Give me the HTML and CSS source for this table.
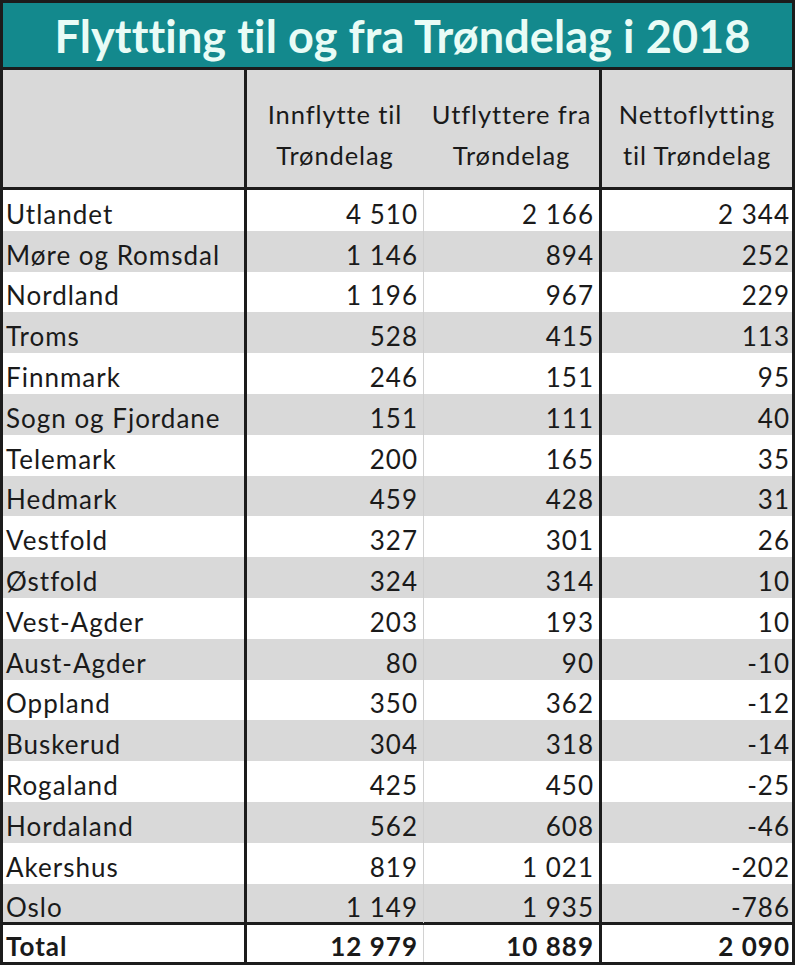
FILE: index.html
```html
<!DOCTYPE html>
<html lang="no">
<head>
<meta charset="utf-8">
<title>Flyttting til og fra Trøndelag i 2018</title>
<link rel="stylesheet" href="styles.css">
</head>
<body>
<div class="sheet">
  <div class="title">Flyttting til og fra Trøndelag i 2018</div>
  <div class="row head">
    <div class="c c1"></div>
    <div class="c c2">Innflytte til<br>Trøndelag</div>
    <div class="c c3">Utflyttere fra<br>Trøndelag</div>
    <div class="c c4">Nettoflytting<br>til Trøndelag</div>
  </div>
  <div class="row"><div class="c c1">Utlandet</div><div class="c c2">4 510</div><div class="c c3">2 166</div><div class="c c4">2 344</div></div>
  <div class="row alt"><div class="c c1">Møre og Romsdal</div><div class="c c2">1 146</div><div class="c c3">894</div><div class="c c4">252</div></div>
  <div class="row"><div class="c c1">Nordland</div><div class="c c2">1 196</div><div class="c c3">967</div><div class="c c4">229</div></div>
  <div class="row alt"><div class="c c1">Troms</div><div class="c c2">528</div><div class="c c3">415</div><div class="c c4">113</div></div>
  <div class="row"><div class="c c1">Finnmark</div><div class="c c2">246</div><div class="c c3">151</div><div class="c c4">95</div></div>
  <div class="row alt"><div class="c c1">Sogn og Fjordane</div><div class="c c2">151</div><div class="c c3">111</div><div class="c c4">40</div></div>
  <div class="row"><div class="c c1">Telemark</div><div class="c c2">200</div><div class="c c3">165</div><div class="c c4">35</div></div>
  <div class="row alt"><div class="c c1">Hedmark</div><div class="c c2">459</div><div class="c c3">428</div><div class="c c4">31</div></div>
  <div class="row"><div class="c c1">Vestfold</div><div class="c c2">327</div><div class="c c3">301</div><div class="c c4">26</div></div>
  <div class="row alt"><div class="c c1">Østfold</div><div class="c c2">324</div><div class="c c3">314</div><div class="c c4">10</div></div>
  <div class="row"><div class="c c1">Vest-Agder</div><div class="c c2">203</div><div class="c c3">193</div><div class="c c4">10</div></div>
  <div class="row alt"><div class="c c1">Aust-Agder</div><div class="c c2">80</div><div class="c c3">90</div><div class="c c4">-10</div></div>
  <div class="row"><div class="c c1">Oppland</div><div class="c c2">350</div><div class="c c3">362</div><div class="c c4">-12</div></div>
  <div class="row alt"><div class="c c1">Buskerud</div><div class="c c2">304</div><div class="c c3">318</div><div class="c c4">-14</div></div>
  <div class="row"><div class="c c1">Rogaland</div><div class="c c2">425</div><div class="c c3">450</div><div class="c c4">-25</div></div>
  <div class="row alt"><div class="c c1">Hordaland</div><div class="c c2">562</div><div class="c c3">608</div><div class="c c4">-46</div></div>
  <div class="row"><div class="c c1">Akershus</div><div class="c c2">819</div><div class="c c3">1 021</div><div class="c c4">-202</div></div>
  <div class="row alt last"><div class="c c1">Oslo</div><div class="c c2">1 149</div><div class="c c3">1 935</div><div class="c c4">-786</div></div>
  <div class="row total"><div class="c c1">Total</div><div class="c c2">12 979</div><div class="c c3">10 889</div><div class="c c4">2 090</div></div>
</div>
</body>
</html>
```

FILE: styles.css
```css
html, body {
  margin: 0;
  padding: 0;
  background: #ffffff;
}

.sheet {
  width: 795px;
  box-sizing: border-box;
  border: 3px solid #1c1c1c;
  font-family: Lato, "Liberation Sans", sans-serif;
  color: #1a1a1a;
}

.title {
  height: 67px;
  box-sizing: border-box;
  border-bottom: 3px solid #1c1c1c;
  background: #13898d;
  color: #e9fcf6;
  font-weight: 700;
  font-size: 45px;
  letter-spacing: 0.1px;
  display: flex;
  align-items: center;
  justify-content: center;
  padding: 2px 0 0 10px;
}

.row {
  display: grid;
  grid-template-columns: 244px 177px 178px 190px;
  height: 40.8px;
  font-size: 26px;
  letter-spacing: 1px;
}

.row.alt {
  background: #d9d9d9;
}

.c {
  display: flex;
  align-items: center;
  justify-content: flex-end;
  box-sizing: border-box;
  padding-top: 7px;
  padding-right: 5px;
  white-space: nowrap;
}

.c1 {
  justify-content: flex-start;
  padding-left: 3px;
  border-right: 3px solid #1c1c1c;
}

.c2 {
  border-right: 1px solid #d2d2d2;
}

.row.alt .c2 {
  border-right-color: #cfcfcf;
}

.c3 {
  border-right: 3px solid #1c1c1c;
}

.c4 {
  padding-right: 2px;
}

.row.head {
  height: 120px;
  background: #d9d9d9;
  border-bottom: 3px solid #1c1c1c;
  box-sizing: border-box;
  font-size: 25.5px;
  letter-spacing: 0.9px;
  line-height: 41px;
}

.row.head .c {
  justify-content: center;
  text-align: center;
  padding: 12px 0 0;
}

.row.head .c2 {
  border-right-color: #d9d9d9;
}

.row.last {
  height: 41.6px;
  border-bottom: 3px solid #1c1c1c;
  box-sizing: border-box;
}

.row.total {
  height: 37px;
  font-weight: 700;
}

.row.total .c {
  padding-top: 4px;
}
```
